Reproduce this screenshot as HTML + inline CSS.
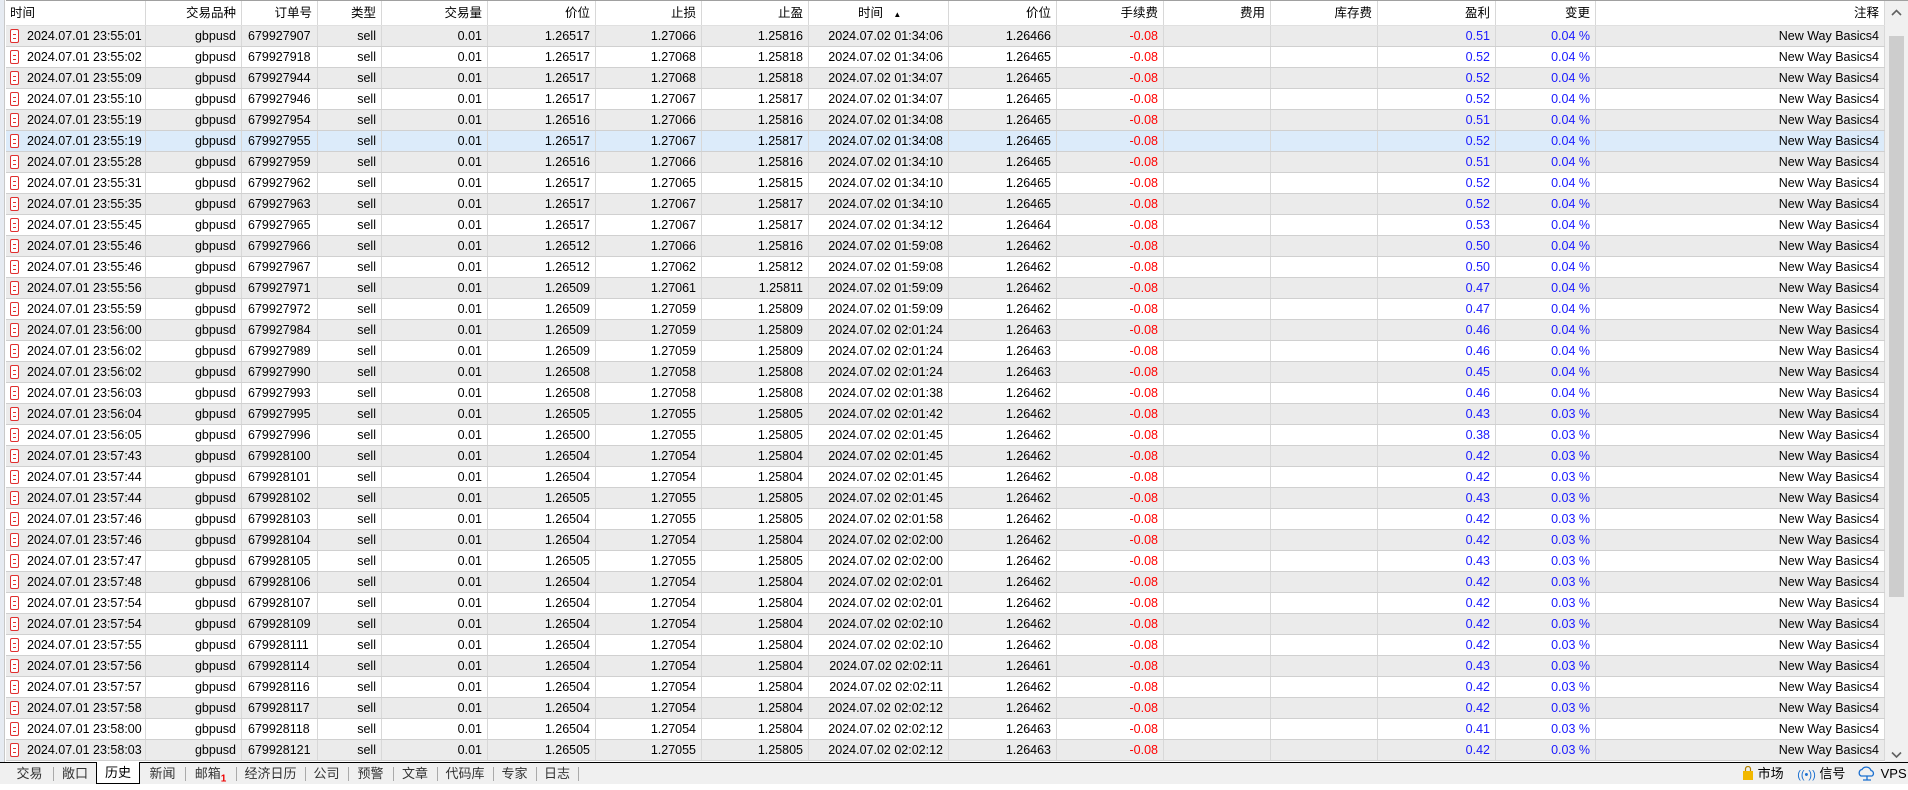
<!DOCTYPE html>
<html><head><meta charset="utf-8"><style>
*{margin:0;padding:0;box-sizing:border-box}
body{width:1908px;height:784px;overflow:hidden;background:#fff;font-family:"Liberation Sans","Noto Sans CJK SC",sans-serif;font-size:12.5px;color:#000;position:relative}
#left{position:absolute;left:0;top:0;width:5px;height:784px;background:#e6ebf2;border-right:1px solid #c8c8c8}
#tbl{position:absolute;left:6px;top:0;width:1879px}
.h,.r{display:flex;height:21px;white-space:nowrap}
.h{height:26px;border-top:1px solid #a0a0a0;border-bottom:1px solid #e0e0e0;background:#fff}
.h span{line-height:24px}
.r{border-bottom:1px solid #d0d0d0}
.r:nth-child(even){background:#ebebeb}
.r.sel{background:#dcebfa}
.h span,.r span{display:block;flex:none;text-align:right;padding-right:5px;border-right:1px solid #d8d8d8;overflow:hidden}
.r span{line-height:20px}
span:nth-child(1){width:140px;text-align:left!important;padding-left:4px}
span:nth-child(2){width:96px}
span:nth-child(3){width:76px}
.r span:nth-child(3){text-align:left;padding-left:6px}
span:nth-child(4){width:64px}
span:nth-child(5){width:106px}
span:nth-child(6){width:108px}
span:nth-child(7){width:106px}
span:nth-child(8){width:107px}
span:nth-child(9){width:140px}
span:nth-child(10){width:108px}
span:nth-child(11){width:107px}
span:nth-child(12){width:107px}
span:nth-child(13){width:107px}
span:nth-child(14){width:118px}
span:nth-child(15){width:100px}
span:nth-child(16){width:289px}
.r span:nth-child(11){color:#f00}
.r span:nth-child(14),.r span:nth-child(15){color:#1a1aff}
i{display:inline-block;width:9px;height:14px;border:1.3px solid #e03030;border-radius:2px;vertical-align:-3px;margin-left:0px;margin-right:8px;position:relative;background:#fff}
i:after{content:"";position:absolute;left:2px;top:4px;width:3px;height:3px;border-top:1px solid #e03030;border-bottom:1px solid #e03030}
#sb{position:absolute;left:1885px;top:0;width:23px;height:762px;background:#f0f0f0;border-top:1px solid #a0a0a0}
#thumb{position:absolute;left:4px;top:35px;width:15px;height:561px;background:#cdcdcd}
#tabs{position:absolute;left:0;top:762px;width:1908px;height:22px;background:#f0f0f0;border-top:1px solid #000}
.t{position:absolute;top:0;height:21px;line-height:21px;font-size:13px;color:#333;text-align:center}
.sep{position:absolute;top:4px;width:1px;height:14px;background:#aaa}
</style></head><body>
<div id="left"></div>
<div id="tbl">
<div class="h"><span>时间</span><span>交易品种</span><span>订单号</span><span>类型</span><span>交易量</span><span>价位</span><span>止损</span><span>止盈</span><span>时间 &nbsp; <small style="font-size:8px">▲</small>&nbsp;&nbsp;&nbsp;&nbsp;&nbsp;&nbsp;&nbsp;&nbsp;&nbsp;&nbsp;&nbsp;&nbsp;</span><span>价位</span><span>手续费</span><span>费用</span><span>库存费</span><span>盈利</span><span>变更</span><span>注释</span></div>
<div class="r"><span><i></i>2024.07.01 23:55:01</span><span>gbpusd</span><span>679927907</span><span>sell</span><span>0.01</span><span>1.26517</span><span>1.27066</span><span>1.25816</span><span>2024.07.02 01:34:06</span><span>1.26466</span><span>-0.08</span><span></span><span></span><span>0.51</span><span>0.04 %</span><span>New Way Basics4</span></div>
<div class="r"><span><i></i>2024.07.01 23:55:02</span><span>gbpusd</span><span>679927918</span><span>sell</span><span>0.01</span><span>1.26517</span><span>1.27068</span><span>1.25818</span><span>2024.07.02 01:34:06</span><span>1.26465</span><span>-0.08</span><span></span><span></span><span>0.52</span><span>0.04 %</span><span>New Way Basics4</span></div>
<div class="r"><span><i></i>2024.07.01 23:55:09</span><span>gbpusd</span><span>679927944</span><span>sell</span><span>0.01</span><span>1.26517</span><span>1.27068</span><span>1.25818</span><span>2024.07.02 01:34:07</span><span>1.26465</span><span>-0.08</span><span></span><span></span><span>0.52</span><span>0.04 %</span><span>New Way Basics4</span></div>
<div class="r"><span><i></i>2024.07.01 23:55:10</span><span>gbpusd</span><span>679927946</span><span>sell</span><span>0.01</span><span>1.26517</span><span>1.27067</span><span>1.25817</span><span>2024.07.02 01:34:07</span><span>1.26465</span><span>-0.08</span><span></span><span></span><span>0.52</span><span>0.04 %</span><span>New Way Basics4</span></div>
<div class="r"><span><i></i>2024.07.01 23:55:19</span><span>gbpusd</span><span>679927954</span><span>sell</span><span>0.01</span><span>1.26516</span><span>1.27066</span><span>1.25816</span><span>2024.07.02 01:34:08</span><span>1.26465</span><span>-0.08</span><span></span><span></span><span>0.51</span><span>0.04 %</span><span>New Way Basics4</span></div>
<div class="r sel"><span><i></i>2024.07.01 23:55:19</span><span>gbpusd</span><span>679927955</span><span>sell</span><span>0.01</span><span>1.26517</span><span>1.27067</span><span>1.25817</span><span>2024.07.02 01:34:08</span><span>1.26465</span><span>-0.08</span><span></span><span></span><span>0.52</span><span>0.04 %</span><span>New Way Basics4</span></div>
<div class="r"><span><i></i>2024.07.01 23:55:28</span><span>gbpusd</span><span>679927959</span><span>sell</span><span>0.01</span><span>1.26516</span><span>1.27066</span><span>1.25816</span><span>2024.07.02 01:34:10</span><span>1.26465</span><span>-0.08</span><span></span><span></span><span>0.51</span><span>0.04 %</span><span>New Way Basics4</span></div>
<div class="r"><span><i></i>2024.07.01 23:55:31</span><span>gbpusd</span><span>679927962</span><span>sell</span><span>0.01</span><span>1.26517</span><span>1.27065</span><span>1.25815</span><span>2024.07.02 01:34:10</span><span>1.26465</span><span>-0.08</span><span></span><span></span><span>0.52</span><span>0.04 %</span><span>New Way Basics4</span></div>
<div class="r"><span><i></i>2024.07.01 23:55:35</span><span>gbpusd</span><span>679927963</span><span>sell</span><span>0.01</span><span>1.26517</span><span>1.27067</span><span>1.25817</span><span>2024.07.02 01:34:10</span><span>1.26465</span><span>-0.08</span><span></span><span></span><span>0.52</span><span>0.04 %</span><span>New Way Basics4</span></div>
<div class="r"><span><i></i>2024.07.01 23:55:45</span><span>gbpusd</span><span>679927965</span><span>sell</span><span>0.01</span><span>1.26517</span><span>1.27067</span><span>1.25817</span><span>2024.07.02 01:34:12</span><span>1.26464</span><span>-0.08</span><span></span><span></span><span>0.53</span><span>0.04 %</span><span>New Way Basics4</span></div>
<div class="r"><span><i></i>2024.07.01 23:55:46</span><span>gbpusd</span><span>679927966</span><span>sell</span><span>0.01</span><span>1.26512</span><span>1.27066</span><span>1.25816</span><span>2024.07.02 01:59:08</span><span>1.26462</span><span>-0.08</span><span></span><span></span><span>0.50</span><span>0.04 %</span><span>New Way Basics4</span></div>
<div class="r"><span><i></i>2024.07.01 23:55:46</span><span>gbpusd</span><span>679927967</span><span>sell</span><span>0.01</span><span>1.26512</span><span>1.27062</span><span>1.25812</span><span>2024.07.02 01:59:08</span><span>1.26462</span><span>-0.08</span><span></span><span></span><span>0.50</span><span>0.04 %</span><span>New Way Basics4</span></div>
<div class="r"><span><i></i>2024.07.01 23:55:56</span><span>gbpusd</span><span>679927971</span><span>sell</span><span>0.01</span><span>1.26509</span><span>1.27061</span><span>1.25811</span><span>2024.07.02 01:59:09</span><span>1.26462</span><span>-0.08</span><span></span><span></span><span>0.47</span><span>0.04 %</span><span>New Way Basics4</span></div>
<div class="r"><span><i></i>2024.07.01 23:55:59</span><span>gbpusd</span><span>679927972</span><span>sell</span><span>0.01</span><span>1.26509</span><span>1.27059</span><span>1.25809</span><span>2024.07.02 01:59:09</span><span>1.26462</span><span>-0.08</span><span></span><span></span><span>0.47</span><span>0.04 %</span><span>New Way Basics4</span></div>
<div class="r"><span><i></i>2024.07.01 23:56:00</span><span>gbpusd</span><span>679927984</span><span>sell</span><span>0.01</span><span>1.26509</span><span>1.27059</span><span>1.25809</span><span>2024.07.02 02:01:24</span><span>1.26463</span><span>-0.08</span><span></span><span></span><span>0.46</span><span>0.04 %</span><span>New Way Basics4</span></div>
<div class="r"><span><i></i>2024.07.01 23:56:02</span><span>gbpusd</span><span>679927989</span><span>sell</span><span>0.01</span><span>1.26509</span><span>1.27059</span><span>1.25809</span><span>2024.07.02 02:01:24</span><span>1.26463</span><span>-0.08</span><span></span><span></span><span>0.46</span><span>0.04 %</span><span>New Way Basics4</span></div>
<div class="r"><span><i></i>2024.07.01 23:56:02</span><span>gbpusd</span><span>679927990</span><span>sell</span><span>0.01</span><span>1.26508</span><span>1.27058</span><span>1.25808</span><span>2024.07.02 02:01:24</span><span>1.26463</span><span>-0.08</span><span></span><span></span><span>0.45</span><span>0.04 %</span><span>New Way Basics4</span></div>
<div class="r"><span><i></i>2024.07.01 23:56:03</span><span>gbpusd</span><span>679927993</span><span>sell</span><span>0.01</span><span>1.26508</span><span>1.27058</span><span>1.25808</span><span>2024.07.02 02:01:38</span><span>1.26462</span><span>-0.08</span><span></span><span></span><span>0.46</span><span>0.04 %</span><span>New Way Basics4</span></div>
<div class="r"><span><i></i>2024.07.01 23:56:04</span><span>gbpusd</span><span>679927995</span><span>sell</span><span>0.01</span><span>1.26505</span><span>1.27055</span><span>1.25805</span><span>2024.07.02 02:01:42</span><span>1.26462</span><span>-0.08</span><span></span><span></span><span>0.43</span><span>0.03 %</span><span>New Way Basics4</span></div>
<div class="r"><span><i></i>2024.07.01 23:56:05</span><span>gbpusd</span><span>679927996</span><span>sell</span><span>0.01</span><span>1.26500</span><span>1.27055</span><span>1.25805</span><span>2024.07.02 02:01:45</span><span>1.26462</span><span>-0.08</span><span></span><span></span><span>0.38</span><span>0.03 %</span><span>New Way Basics4</span></div>
<div class="r"><span><i></i>2024.07.01 23:57:43</span><span>gbpusd</span><span>679928100</span><span>sell</span><span>0.01</span><span>1.26504</span><span>1.27054</span><span>1.25804</span><span>2024.07.02 02:01:45</span><span>1.26462</span><span>-0.08</span><span></span><span></span><span>0.42</span><span>0.03 %</span><span>New Way Basics4</span></div>
<div class="r"><span><i></i>2024.07.01 23:57:44</span><span>gbpusd</span><span>679928101</span><span>sell</span><span>0.01</span><span>1.26504</span><span>1.27054</span><span>1.25804</span><span>2024.07.02 02:01:45</span><span>1.26462</span><span>-0.08</span><span></span><span></span><span>0.42</span><span>0.03 %</span><span>New Way Basics4</span></div>
<div class="r"><span><i></i>2024.07.01 23:57:44</span><span>gbpusd</span><span>679928102</span><span>sell</span><span>0.01</span><span>1.26505</span><span>1.27055</span><span>1.25805</span><span>2024.07.02 02:01:45</span><span>1.26462</span><span>-0.08</span><span></span><span></span><span>0.43</span><span>0.03 %</span><span>New Way Basics4</span></div>
<div class="r"><span><i></i>2024.07.01 23:57:46</span><span>gbpusd</span><span>679928103</span><span>sell</span><span>0.01</span><span>1.26504</span><span>1.27055</span><span>1.25805</span><span>2024.07.02 02:01:58</span><span>1.26462</span><span>-0.08</span><span></span><span></span><span>0.42</span><span>0.03 %</span><span>New Way Basics4</span></div>
<div class="r"><span><i></i>2024.07.01 23:57:46</span><span>gbpusd</span><span>679928104</span><span>sell</span><span>0.01</span><span>1.26504</span><span>1.27054</span><span>1.25804</span><span>2024.07.02 02:02:00</span><span>1.26462</span><span>-0.08</span><span></span><span></span><span>0.42</span><span>0.03 %</span><span>New Way Basics4</span></div>
<div class="r"><span><i></i>2024.07.01 23:57:47</span><span>gbpusd</span><span>679928105</span><span>sell</span><span>0.01</span><span>1.26505</span><span>1.27055</span><span>1.25805</span><span>2024.07.02 02:02:00</span><span>1.26462</span><span>-0.08</span><span></span><span></span><span>0.43</span><span>0.03 %</span><span>New Way Basics4</span></div>
<div class="r"><span><i></i>2024.07.01 23:57:48</span><span>gbpusd</span><span>679928106</span><span>sell</span><span>0.01</span><span>1.26504</span><span>1.27054</span><span>1.25804</span><span>2024.07.02 02:02:01</span><span>1.26462</span><span>-0.08</span><span></span><span></span><span>0.42</span><span>0.03 %</span><span>New Way Basics4</span></div>
<div class="r"><span><i></i>2024.07.01 23:57:54</span><span>gbpusd</span><span>679928107</span><span>sell</span><span>0.01</span><span>1.26504</span><span>1.27054</span><span>1.25804</span><span>2024.07.02 02:02:01</span><span>1.26462</span><span>-0.08</span><span></span><span></span><span>0.42</span><span>0.03 %</span><span>New Way Basics4</span></div>
<div class="r"><span><i></i>2024.07.01 23:57:54</span><span>gbpusd</span><span>679928109</span><span>sell</span><span>0.01</span><span>1.26504</span><span>1.27054</span><span>1.25804</span><span>2024.07.02 02:02:10</span><span>1.26462</span><span>-0.08</span><span></span><span></span><span>0.42</span><span>0.03 %</span><span>New Way Basics4</span></div>
<div class="r"><span><i></i>2024.07.01 23:57:55</span><span>gbpusd</span><span>679928111</span><span>sell</span><span>0.01</span><span>1.26504</span><span>1.27054</span><span>1.25804</span><span>2024.07.02 02:02:10</span><span>1.26462</span><span>-0.08</span><span></span><span></span><span>0.42</span><span>0.03 %</span><span>New Way Basics4</span></div>
<div class="r"><span><i></i>2024.07.01 23:57:56</span><span>gbpusd</span><span>679928114</span><span>sell</span><span>0.01</span><span>1.26504</span><span>1.27054</span><span>1.25804</span><span>2024.07.02 02:02:11</span><span>1.26461</span><span>-0.08</span><span></span><span></span><span>0.43</span><span>0.03 %</span><span>New Way Basics4</span></div>
<div class="r"><span><i></i>2024.07.01 23:57:57</span><span>gbpusd</span><span>679928116</span><span>sell</span><span>0.01</span><span>1.26504</span><span>1.27054</span><span>1.25804</span><span>2024.07.02 02:02:11</span><span>1.26462</span><span>-0.08</span><span></span><span></span><span>0.42</span><span>0.03 %</span><span>New Way Basics4</span></div>
<div class="r"><span><i></i>2024.07.01 23:57:58</span><span>gbpusd</span><span>679928117</span><span>sell</span><span>0.01</span><span>1.26504</span><span>1.27054</span><span>1.25804</span><span>2024.07.02 02:02:12</span><span>1.26462</span><span>-0.08</span><span></span><span></span><span>0.42</span><span>0.03 %</span><span>New Way Basics4</span></div>
<div class="r"><span><i></i>2024.07.01 23:58:00</span><span>gbpusd</span><span>679928118</span><span>sell</span><span>0.01</span><span>1.26504</span><span>1.27054</span><span>1.25804</span><span>2024.07.02 02:02:12</span><span>1.26463</span><span>-0.08</span><span></span><span></span><span>0.41</span><span>0.03 %</span><span>New Way Basics4</span></div>
<div class="r"><span><i></i>2024.07.01 23:58:03</span><span>gbpusd</span><span>679928121</span><span>sell</span><span>0.01</span><span>1.26505</span><span>1.27055</span><span>1.25805</span><span>2024.07.02 02:02:12</span><span>1.26463</span><span>-0.08</span><span></span><span></span><span>0.42</span><span>0.03 %</span><span>New Way Basics4</span></div>
</div>
<div id="sb">
<svg style="position:absolute;left:6px;top:8px" width="11" height="8"><path d="M1 6 L5.5 1.5 L10 6" fill="none" stroke="#606060" stroke-width="1.6"/></svg>
<div id="thumb"></div>
<svg style="position:absolute;left:6px;top:750px" width="11" height="8"><path d="M1 1.5 L5.5 6 L10 1.5" fill="none" stroke="#606060" stroke-width="1.6"/></svg>
</div>
<div id="tabs">
<div class="t" style="left:6px;width:47px">交易</div><div class="sep" style="left:53px"></div>
<div class="t" style="left:53px;width:44px">敞口</div>
<div class="t" style="left:96px;width:44px;top:-1px;height:22px;background:#fff;border:1px solid #000;border-top:none;color:#000">历史</div>
<div class="t" style="left:140px;width:45px">新闻</div><div class="sep" style="left:185px"></div>
<div class="t" style="left:185px;width:51px">邮箱<sub style="color:#e00;font-size:10px;font-weight:bold">1</sub></div><div class="sep" style="left:236px"></div>
<div class="t" style="left:236px;width:69px">经济日历</div><div class="sep" style="left:305px"></div>
<div class="t" style="left:305px;width:43px">公司</div><div class="sep" style="left:348px"></div>
<div class="t" style="left:348px;width:45px">预警</div><div class="sep" style="left:393px"></div>
<div class="t" style="left:393px;width:44px">文章</div><div class="sep" style="left:437px"></div>
<div class="t" style="left:437px;width:56px">代码库</div><div class="sep" style="left:493px"></div>
<div class="t" style="left:493px;width:43px">专家</div><div class="sep" style="left:536px"></div>
<div class="t" style="left:536px;width:42px">日志</div><div class="sep" style="left:578px"></div>
<div style="position:absolute;left:1742px;top:3px;font-size:13px;line-height:16px;white-space:nowrap">
<svg width="12" height="15" style="vertical-align:-3px"><path d="M3.5 5 V3 a2.5 2.5 0 0 1 5 0 V5" fill="none" stroke="#b08000" stroke-width="1.2"/><rect x="1" y="5" width="10" height="9" fill="#f2b800"/></svg> 市场
<span style="color:#1a6fd0;font-size:11px;margin-left:10px">((•))</span> 信号
<svg width="20" height="16" style="vertical-align:-4px;margin-left:8px"><path d="M4 10 a3.5 3.5 0 0 1 1-6.5 a5 5 0 0 1 9 1 a3 3 0 0 1 1 5.5 Z" fill="none" stroke="#1a6fd0" stroke-width="1.3"/><path d="M10 10 V14 M6 14 H14" stroke="#1a6fd0" stroke-width="1.3"/></svg> VPS
</div>
</div>
</body></html>
